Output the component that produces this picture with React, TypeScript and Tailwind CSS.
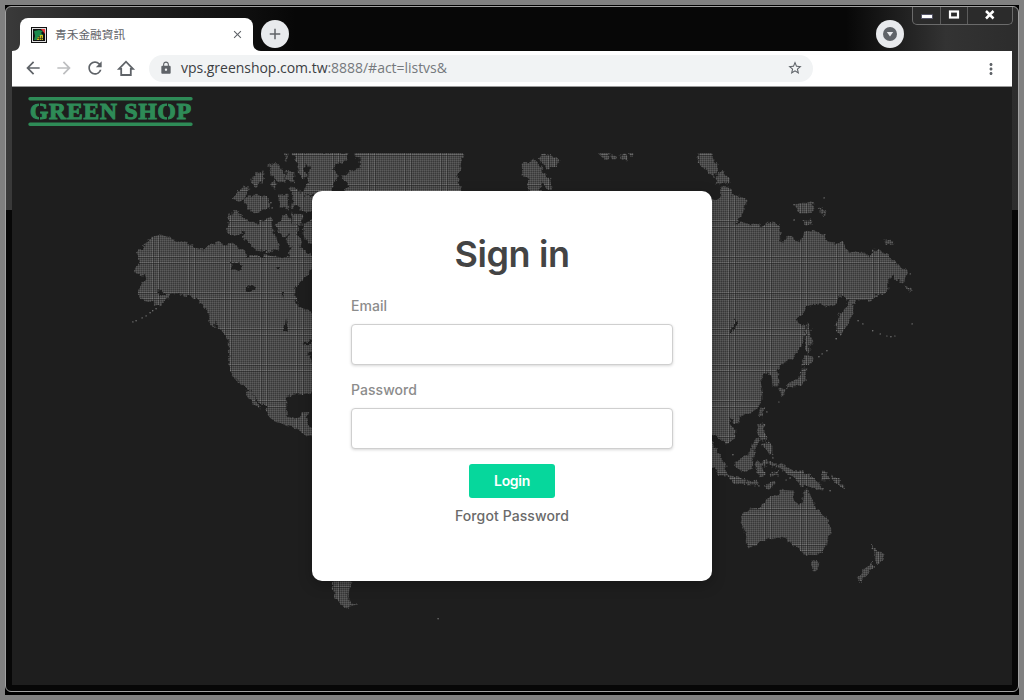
import React from 'react';
import {
  MdAdd,
  MdArrowBack,
  MdArrowForward,
  MdClose,
  MdLock,
  MdMoreVert,
  MdRefresh,
  MdStarBorder,
} from 'react-icons/md';

const land = [
  // North America
  '134,270 140,262 137,253 144,246 150,238 160,235 168,237 175,241 186,243 192,246 200,249 203,250 208,246 214,244 220,242 225,246 232,243 236,247 243,250 248,257 258,255 270,256 283,258 290,250 298,246 306,252 312,256 312,265 308,274 300,283 296,286 294,295 296,303 302,308 308,311 316,314 316,391 303,394 295,394 286,396 286,408 287,416 293,419 299,418 301,413 309,412 306,419 306,424 316,430 316,440 303,432 296,429 290,425 282,424 272,420 268,413 266,408 256,398 250,391 243,384 237,380 231,373 229,366 228,340 220,329 216,323 212,316 206,310 200,303 196,299 190,296 183,295 176,293 172,292 165,301 160,306 154,304 155,302 145,301 138,296 140,288 143,282 148,275 138,275',
  '246,390 251,393 257,401 260,408 254,405 248,396',
  '209,313 214,317 214,328 210,323',
  // Arctic islands
  '228,216 236,211 243,217 248,222 250,228 243,230 239,234 233,236 227,232 229,224',
  '246,222 252,221 258,224 264,220 271,217 272,230 277,240 279,248 272,253 262,251 254,248 248,242 243,236',
  '232,198 238,192 246,185 249,189 246,195 241,201 234,199',
  '244,199 252,195 262,196 269,200 270,207 262,210 254,213 248,208',
  '251,182 255,174 264,172 263,181 255,187',
  '268,165 276,163 283,171 286,181 278,182 271,174',
  '286,170 294,172 294,183 286,179',
  '280,195 288,194 289,209 280,207',
  '290,188 297,189 304,195 316,197 316,212 302,211 298,205 291,208 293,198',
  '276,225 285,215 291,219 291,233 285,237 278,231',
  '292,214 303,215 301,225 293,225',
  '291,225 298,226 297,236 301,240 299,248 290,248 287,241',
  '303,224 316,216 316,245 305,240',
  '284,155 287,153 287,161',
  '271,183 275,182 275,190',
  '292,153 348,153 346,160 336,165 332,170 337,173 337,178 333,184 331,194 302,194 308,184 309,174 303,178 298,172 297,160',
  // Greenland
  '355,150 465,150 461,160 460,168 459,172 457,178 460,184 461,194 342,194 349,186 345,181 342,177 350,172 360,168 360,158 355,157',
  // Svalbard, Franz Josef Land
  '522,164 534,160 540,166 543,172 550,180 551,188 546,190 543,180 541,184 540,194 530,194 528,184 530,180 523,176',
  '538,158 544,154 552,156 559,160 556,166 548,168 542,164',
  '597,150 609,150 609,159 602,158',
  '612,156 616,156 616,159 612,159',
  '620,155 627,155 627,160 621,159',
  '629,152 633,153 632,157',
  // Severnaya Zemlya
  '700,150 711,150 713,160 717,163 717,172 714,177 708,173 704,168 697,163',
  '718,174 722,169 728,177 730,183 722,182 716,184',
  '721,188 730,187 733,194 720,197',
  // Eurasia
  '700,203 718,199 722,194 738,196 745,197 745,206 743,212 738,220 732,226 742,221 748,226 757,224 762,227 767,222 774,223 780,228 781,242 784,243 786,237 790,236 795,240 800,242 804,232 813,230 820,234 824,235 828,243 836,244 842,242 846,247 848,253 858,252 865,252 870,258 872,250 882,251 888,256 894,262 900,267 906,270 907,275 904,282 898,281 893,276 888,280 888,290 886,292 876,295 870,301 866,300 858,300 853,305 853,312 850,320 846,327 841,336 837,332 837,320 841,312 846,308 850,299 846,299 842,295 838,296 836,304 828,307 820,304 808,305 803,313 796,320 799,324 805,326 804,338 798,350 792,358 782,364 776,370 779,376 779,386 773,386 772,378 768,372 763,374 760,380 762,390 762,400 758,407 750,413 742,416 733,418 729,418 728,421 733,427 736,433 734,439 727,444 722,440 718,436 700,432',
  '885,241 892,240 894,244 886,245',
  '905,286 911,288 911,291 906,289',
  '796,205 803,202 812,203 815,209 808,213 799,213',
  '818,207 826,212 825,215 819,211',
  '804,221 811,221 811,225 805,225',
  // Japan and the western Pacific
  '807,323 810,330 813,343 809,343 809,354 806,352 806,330',
  '806,354 815,360 809,365 802,365',
  '802,368 806,368 805,380 802,385 793,386 783,390 790,383 800,377',
  '780,388 785,390 782,397 780,393',
  '734,418 738,417 739,423 734,423',
  '760,409 764,408 762,417 759,415',
  '759,424 764,424 764,434 768,438 765,441 760,438 757,432',
  '762,443 769,441 772,447 772,455 767,452',
  '752,446 757,438 760,440 754,448',
  '734,462 742,458 748,455 752,448 756,453 753,460 751,469 742,471 736,467',
  '700,436 712,443 718,452 724,463 727,475 720,475 708,462',
  '727,475 735,477 746,480 744,484 733,482',
  '747,481 757,481 757,485 748,485',
  '765,486 774,481 774,485 767,489',
  '756,463 768,461 768,464 761,467 767,475 760,477 756,470',
  '770,462 776,463 778,467 772,467',
  '770,473 780,470 778,475 771,476',
  '781,463 790,470 800,471 810,475 817,482 823,490 816,489 808,486 800,485 794,477 787,473 779,468',
  '822,472 828,473 829,480 822,480',
  '831,476 838,480 845,488 842,489 836,483',
  // Australia, New Zealand
  '743,512 750,509 761,508 763,502 770,497 777,496 779,490 793,491 792,500 798,505 803,504 805,490 808,490 812,502 816,508 822,514 829,520 831,530 828,540 824,550 816,555 803,554 798,547 793,546 788,540 780,536 768,539 757,544 750,547 746,542 747,534 741,523',
  '811,560 819,562 817,570 813,570',
  '871,545 877,551 884,553 883,558 877,564 874,559 875,553',
  '871,562 875,566 866,575 860,582 857,578 864,570',
  // Patagonia
  '332,575 352,575 349,590 348,598 352,604 357,605 347,608 340,604 335,596 333,588',
];

const lakes = [
  '231,263 238,262 243,267 238,271 232,269',
  '246,285 257,287 250,293 246,291',
  '247,253 266,250 264,258 257,256 248,256',
  '270,250 286,252 290,258 276,254',
  '286,318 288,332 284,330',
  '301,343 312,340 312,345 306,345',
  '308,353 316,348 312,362',
  '729,332 736,319 738,323 731,333',
  '305,163 310,168 307,176 304,170',
  '156,291 160,290 166,295 160,296',
  '276,266 280,266 280,269 277,269',
  '282,292 285,292 283,298',
];

const islets = [
  [132, 321], [135, 320], [141, 317], [145, 315], [149, 312], [152, 310], [155, 308],
  [793, 204], [793, 219], [823, 197], [857, 320], [862, 323], [872, 330], [879, 333], [886, 335],
  [890, 336], [894, 335], [911, 323], [835, 338], [826, 350], [821, 353], [818, 356], [778, 401],
  [766, 411], [772, 457], [769, 461], [763, 460], [773, 464], [732, 454], [785, 479], [789, 477],
  [822, 488], [829, 490], [437, 618], [909, 273], [270, 202], [271, 207], [784, 465], [758, 485],
];

const steps = Array.from({ length: 18 }, (_, i) => i * 2);

function WorldMap() {
  return (
    <svg className="block h-full w-full" viewBox="12 87 1000 598" preserveAspectRatio="none">
      <defs>
        <pattern id="dots" width="36" height="36" patternUnits="userSpaceOnUse">
          <rect width="36" height="36" fill="#393939" />
          {steps.map((n) => (
            <rect key={`v${n}`} x={n} width="1" height="36" fill="#fff" opacity="0.09" />
          ))}
          {steps.map((n) => (
            <rect key={`h${n}`} y={n} width="36" height="1" fill="#fff" opacity="0.09" />
          ))}
          <path d="M8.5 0V36M14.5 0V36M0 4.5H36M0 10.5H36" stroke="#fff" strokeOpacity="0.1" />
          <path d="M9.5 0V36M15.5 0V36M0 5.5H36M0 11.5H36" stroke="#1e1e1e" strokeOpacity="0.4" />
        </pattern>
        <filter id="rough" x="0" y="0" width="1024" height="700" filterUnits="userSpaceOnUse">
          <feTurbulence type="fractalNoise" baseFrequency="0.22" numOctaves="2" seed="4" />
          <feDisplacementMap in="SourceGraphic" scale="6" xChannelSelector="R" yChannelSelector="G" />
        </filter>
        <mask id="land" maskUnits="userSpaceOnUse" x="12" y="153" width="1000" height="500">
          <g filter="url(#rough)">
            {land.map((points) => (
              <polygon key={points} points={points} fill="#fff" stroke="#fff" strokeWidth="0.6" />
            ))}
            {lakes.map((points) => (
              <polygon key={points} points={points} fill="#000" />
            ))}
          </g>
          {islets.map(([x, y]) => (
            <rect key={`${x}-${y}`} x={x} y={y} width="2" height="1.5" fill="#fff" />
          ))}
        </mask>
      </defs>
      <rect x="12" y="153" width="1000" height="500" fill="url(#dots)" mask="url(#land)" />
    </svg>
  );
}

function Logo() {
  return (
    <svg className="block overflow-visible" width="170" height="34" viewBox="0 0 170 34">
      <path d="M3 3.7H164M3 29.2H164" stroke="#2e8b57" strokeWidth="3.4" strokeLinecap="round" />
      <text
        x="3"
        y="24"
        fontFamily="'Liberation Serif', serif"
        fontSize="23.5"
        fontWeight="700"
        fill="#2e8b57"
        stroke="#2e8b57"
        strokeWidth="1.1"
        textLength="161"
        lengthAdjust="spacing"
      >
        GREEN SHOP
      </text>
      <path d="M12.5 7V25M140.5 7V25" stroke="#1e1e1e" strokeWidth="1" />
    </svg>
  );
}

function Favicon() {
  return (
    <svg width="16" height="16" viewBox="0 0 16 16">
      <rect width="16" height="16" fill="#111" />
      <rect x="1.5" y="1.5" width="13" height="13" fill="#111" stroke="#ddd" />
      <path d="M3 4L8 3L12 4L10 6L12 8L8 9L6 13H3L4 9Z" fill="#1d8a4e" />
      <path d="M10 2H14V7Z" fill="#e23b3b" />
      <path d="M6 13V11L8 10L9 8H12V13Z" fill="#c8c21c" />
      <path d="M6 11.5H12M8.5 9V13M10.5 9V13" stroke="#222" strokeWidth="0.6" />
    </svg>
  );
}

function WindowButtons() {
  return (
    <div className="absolute top-0 right-[5px] flex h-[18px] w-[101px] rounded-b-[5px] border border-t-0 border-[#6b6b6b] bg-[#2b2b2b]">
      <div className="flex w-7 items-center justify-center border-r border-[#5c5c5c]">
        <svg width="12" height="6" viewBox="0 0 12 6">
          <rect x="0.5" y="1.5" width="11" height="4" rx="0.5" fill="#fff" stroke="#55556a" />
        </svg>
      </div>
      <div className="flex w-[27px] items-center justify-center border-r border-[#5c5c5c] pb-0.5">
        <svg width="12" height="10" viewBox="0 0 12 10">
          <rect x="2" y="1.5" width="8" height="6" fill="none" stroke="#fff" strokeWidth="2.2" />
        </svg>
      </div>
      <div className="flex flex-1 items-center justify-center pb-0.5">
        <svg width="12" height="10" viewBox="0 0 12 10">
          <path d="M2 1L9.5 8.5M9.5 1L2 8.5" stroke="#fff" strokeWidth="2.5" />
        </svg>
      </div>
    </div>
  );
}

function TabStrip() {
  return (
    <div className="relative -mx-[6px] flex h-11 shrink-0 items-end">
      <svg className="ml-[6px] shrink-0" width="8" height="8" viewBox="0 0 8 8">
        <path d="M8 0V8H0C5 8 8 5 8 0Z" fill="#fff" />
      </svg>
      <div className="flex h-[33px] w-[233px] items-center rounded-t-lg bg-white pr-[9px] pl-[11px]">
        <Favicon />
        <span className="mb-0.5 ml-2 flex-1 font-['Noto_Sans_CJK_TC',sans-serif] text-[11.7px] leading-4 text-[#5f6368]">
          青禾金融資訊
        </span>
        <MdClose className="size-[13px] text-[#5f6368]" />
      </div>
      <svg className="shrink-0" width="8" height="8" viewBox="0 0 8 8">
        <path d="M0 0V8H8C3 8 0 5 0 0Z" fill="#fff" />
      </svg>
      <div className="mb-[3px] flex size-7 items-center justify-center rounded-full bg-[#e8eaed] text-[#5f6368]">
        <MdAdd className="size-[18px]" />
      </div>
      <div className="mr-[114px] mb-[3px] ml-auto flex size-7 items-center justify-center rounded-full bg-[#e8eaed]">
        <svg width="14" height="14" viewBox="0 0 14 14">
          <circle cx="7" cy="7" r="7" fill="#5f6368" />
          <path d="M3.8 5H10.2L7 9.5Z" fill="#e8eaed" />
        </svg>
      </div>
      <WindowButtons />
    </div>
  );
}

function Toolbar() {
  return (
    <div className="flex h-9 shrink-0 items-center border-b border-[#9a9a9a] bg-white px-3 pl-[11px] text-[#5f6368]">
      <div className="mb-px flex items-center gap-[11px]">
        <MdArrowBack className="size-5" />
        <MdArrowForward className="size-5 text-[#bdbec0]" />
        <MdRefresh className="size-5" />
        <svg className="size-5" viewBox="0 0 20 20" fill="none" stroke="currentColor" strokeWidth="1.8">
          <path d="M3 10.9L10 3.7L17 10.9H14.8V17H5.2V10.9Z" />
        </svg>
      </div>
      <div className="ml-[13px] flex h-[27px] w-[664px] items-center rounded-full bg-[#f1f3f4] pr-2.5 pb-px pl-2.5">
        <MdLock className="size-[14px]" />
        <span className="ml-2 flex-1 font-['Open_Sans',sans-serif] text-[14px] leading-5 tracking-[-0.03px] whitespace-nowrap text-[#75797d]">
          <span className="text-[#3c4043]">vps.greenshop.com.tw</span>:8888/#act=listvs&amp;
        </span>
        <MdStarBorder className="size-4" />
      </div>
      <MdMoreVert className="ml-auto size-[18px]" />
    </div>
  );
}

function Field({ label, type }: { label: string; type: string }) {
  return (
    <label className="flex w-full flex-col">
      <span className="text-[14px] leading-[21px] font-medium tracking-[0.05px] text-[#8c8c8c]">{label}</span>
      <input
        type={type}
        className="mt-2 h-[41px] rounded-[4px] border border-[#cfcfcf] bg-white shadow-[0_1px_3px_rgba(0,0,0,0.16)] outline-none"
      />
    </label>
  );
}

function SignInCard() {
  return (
    <form className="flex h-[390px] w-[400px] flex-col items-center rounded-[10px] bg-white px-[39px] pt-[37px] font-['Inter',sans-serif] shadow-[0_4px_14px_rgba(0,0,0,0.25)]">
      <h1 className="text-[36px] leading-[53px] font-semibold tracking-[-0.4px] text-[#444]">Sign in</h1>
      <div className="mt-[14px] flex w-full flex-col gap-[14px]">
        <Field label="Email" type="email" />
        <Field label="Password" type="password" />
      </div>
      <button
        type="button"
        className="mt-[15px] h-[34px] w-[86px] rounded-[3px] bg-[#06d79c] pb-0.5 text-[14px] font-semibold tracking-[-0.3px] text-white"
      >
        Login
      </button>
      <a className="mt-[7px] text-[14px] leading-[21px] font-medium tracking-[0.1px] text-[#6a6a6a]">
        Forgot Password
      </a>
    </form>
  );
}

export default function App() {
  return (
    <div className="h-[700px] w-[1024px] overflow-hidden bg-[#808080] p-[5px]">
      <div className="h-[690px] w-[1014px] bg-black pt-px pb-[3px]">
        <div className="flex h-[686px] flex-col rounded-[6px] border border-[#a0a0a0] bg-[linear-gradient(90deg,#3a3a3a_0,#262626_90px,transparent_290px,transparent_840px,#333_940px,#2c2c2c_100%),linear-gradient(#070707,#070707)] bg-[length:100%_203px,100%_100%] bg-no-repeat px-[6px] pb-[6px]">
          <TabStrip />
          <Toolbar />
          <div className="relative min-h-0 flex-1 bg-[#1e1e1e]">
            <WorldMap />
            <div className="absolute top-[7.5px] left-[15px]">
              <Logo />
            </div>
            <div className="absolute inset-x-0 top-[104px] flex justify-center">
              <SignInCard />
            </div>
          </div>
        </div>
      </div>
    </div>
  );
}
